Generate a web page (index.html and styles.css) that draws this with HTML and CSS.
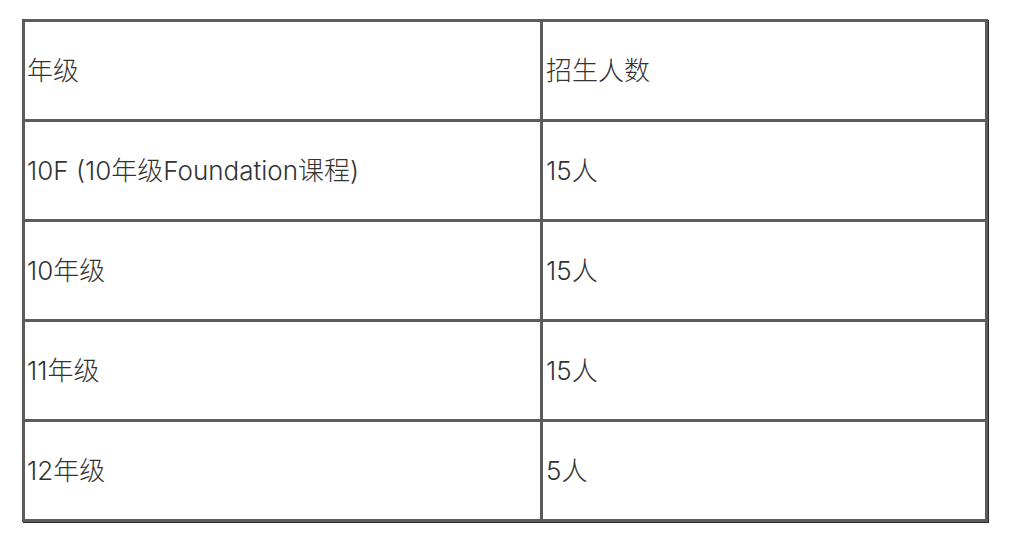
FILE: index.html
```html
<!DOCTYPE html>
<html lang="zh">
<head>
<meta charset="utf-8">
<link rel="stylesheet" href="styles.css">
</head>
<body>
<table class="grid">
  <tr><td class="c1">年级</td><td class="c2">招生人数</td></tr>
  <tr><td class="c1">10F (10年级Foundation课程)</td><td class="c2">15人</td></tr>
  <tr><td class="c1">10年级</td><td class="c2">15人</td></tr>
  <tr><td class="c1">11年级</td><td class="c2">15人</td></tr>
  <tr><td class="c1">12年级</td><td class="c2">5人</td></tr>
</table>
</body>
</html>
```
FILE: styles.css
```css
html, body {
  margin: 0;
  background: #ffffff;
}
body {
  padding: 19px 22px;
  font-family: Inter, "Noto Sans CJK SC", sans-serif;
  font-size: 26px;
  font-weight: 300;
  color: #333333;
}
.grid {
  border-collapse: collapse;
  width: 966px;
  box-shadow: 1px 1px 0 #2a2a2a;
}
.grid td {
  border: 3px solid #5c5c5c;
  height: 100px;
  padding: 0 2px;
  vertical-align: middle;
  box-sizing: border-box;
  line-height: 1.2;
}
.grid .c1 {
  width: 518px;
}
.grid .c2 {
  padding-left: 3px;
}
```
